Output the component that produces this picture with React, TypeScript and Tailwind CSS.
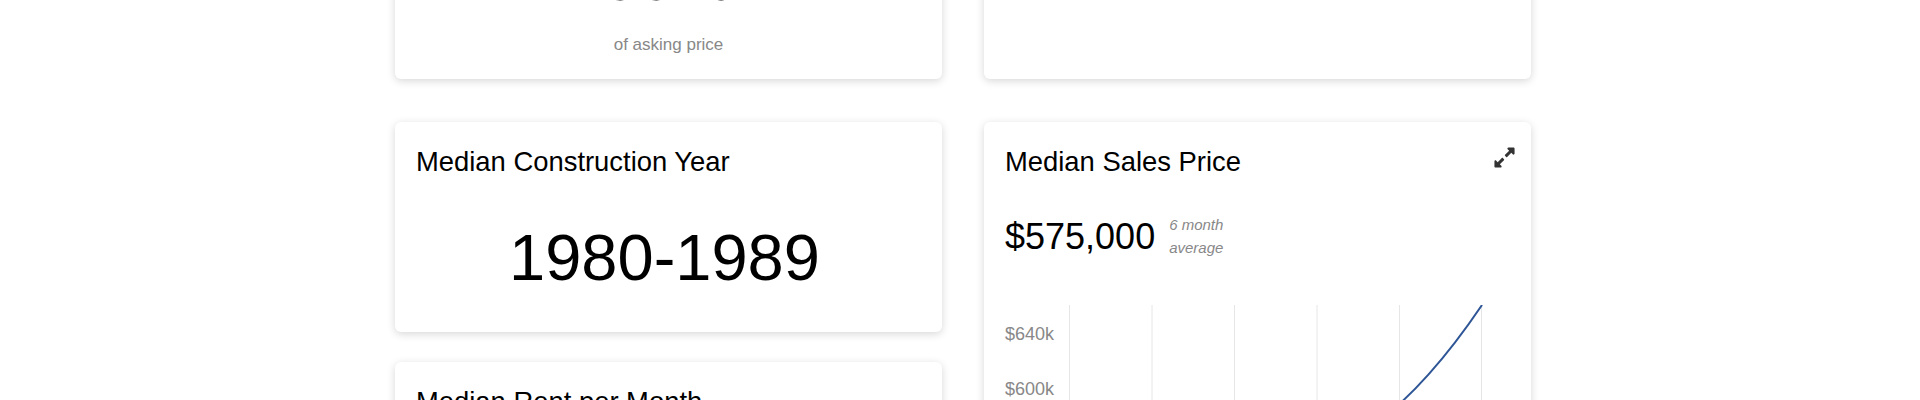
import { FaExpandAlt } from "react-icons/fa";

function Card({
	children,
	className = "",
}: {
	children: React.ReactNode;
	className?: string;
}) {
	return (
		<div
			className={`rounded-md bg-white shadow-[0_2px_8px_rgba(0,0,0,0.16)] ${className}`}
		>
			{children}
		</div>
	);
}

function CardTitle({ children }: { children: React.ReactNode }) {
	return <h3 className="text-[27.4px] leading-[32px] text-black">{children}</h3>;
}

const gridX = [0.5, 83, 165.5, 248, 330.5, 412.5];
const yLabels = ["$640k", "$600k", "$560k", "$520k", "$480k"];

function PriceChart() {
	return (
		<div className="flex">
			<div className="flex w-[64px] flex-col gap-[35px] pt-[19px]">
				{yLabels.map((l) => (
					<span key={l} className="text-[18px] leading-[20px] text-[#888]">
						{l}
					</span>
				))}
			</div>
			<svg width="420" height="300" viewBox="0 0 420 300">
				{gridX.map((x) => (
					<line key={x} x1={x} y1={0} x2={x} y2={300} stroke="#e6e6e6" strokeWidth={1} />
				))}
				<path
					d="M0,170 C80,168 150,166 198,160 Q305,160 413,0"
					fill="none"
					stroke="#2e5596"
					strokeWidth={2}
				/>
			</svg>
		</div>
	);
}

export default function App() {
	return (
		<div className="min-h-[400px] bg-white font-['Liberation_Sans',Arial,sans-serif]">
			<div className="ml-[395px] w-[1136px] -mt-[155px] pb-10">
				<div className="grid grid-cols-[547px_547px] gap-x-[42px]">
					<Card className="px-[21px] pt-[24px] pb-[22px]">
						<CardTitle>Sale-to-List Ratio</CardTitle>
						<div className="mt-[45px] text-center text-[65px] leading-[64px] text-black">
							99%
						</div>
						<div className="mt-[23px] text-center text-[17px] leading-[24px] text-[#888]">
							of asking price
						</div>
					</Card>
					<Card className="px-[21px] pt-[24px] pb-[22px]">
						<CardTitle>Homes Sold</CardTitle>
					</Card>
				</div>

				<div className="mt-[43px] grid grid-cols-[547px_547px] items-start gap-x-[42px]">
					<div className="flex flex-col gap-[30px]">
						<Card className="px-[21px] pt-[24px] pb-[42px]">
							<CardTitle>Median Construction Year</CardTitle>
							<div className="mt-[48px] pr-[8px] text-center text-[65px] leading-[64px] text-black">
								1980-1989
							</div>
						</Card>
						<Card className="px-[21px] pt-[24px] pb-[42px]">
							<CardTitle>Median Rent per Month</CardTitle>
							<div className="mt-[48px] text-center text-[65px] leading-[64px] text-black">
								$2,450
							</div>
						</Card>
					</div>

					<Card className="px-[21px] pt-[24px] pb-[30px]">
						<div className="flex items-start justify-between">
							<CardTitle>Median Sales Price</CardTitle>
							<button className="mr-[-6px] mt-[0px] text-[#333]">
								<FaExpandAlt size={23} />
							</button>
						</div>
						<div className="mt-[35px] flex items-start gap-[14px]">
							<span className="mt-[6px] text-[36px] leading-[36px] text-black">
								$575,000
							</span>
							<span className="flex flex-col text-[15px] italic leading-[23px] text-[#888]">
								<span>6 month</span>
								<span>average</span>
							</span>
						</div>
						<div className="mt-[46px]">
							<PriceChart />
						</div>
					</Card>
				</div>
			</div>
		</div>
	);
}
